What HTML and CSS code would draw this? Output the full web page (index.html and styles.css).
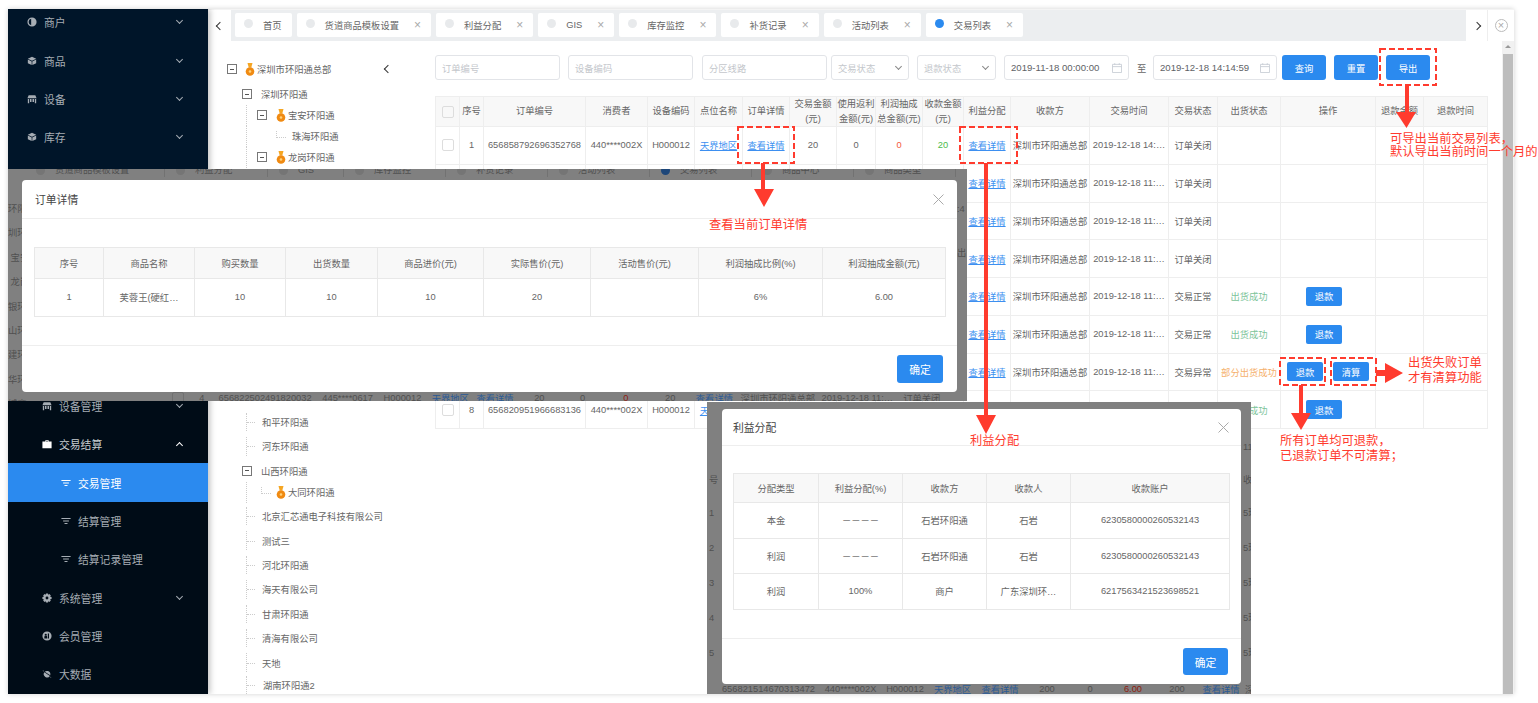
FILE: index.html
```html
<!DOCTYPE html>
<html lang="zh-CN">
<head>
  <meta charset="UTF-8" />
  <title>交易列表</title>
  <link rel="stylesheet" href="styles.css">
</head>
<body>

  <svg class="icon-defs" width="0" height="0">
    <symbol id="i-merchant" viewBox="0 0 12 12"><path fill-rule="evenodd" d="M6 .5a5.5 5.5 0 1 1 0 11a5.5 5.5 0 0 1 0-11zM5 2.2a3.9 3.9 0 0 0 0 7.6z"/></symbol>
    <symbol id="i-cube" viewBox="0 0 12 12"><path d="M6 1l5 2.4L6 5.8 1 3.4zM1 4.3l4.6 2.2v4.4L1 8.7zM11 4.3v4.4l-4.6 2.2V6.5z"/></symbol>
    <symbol id="i-device" viewBox="0 0 12 12"><path d="M2 1.5h8L11.5 5h-11zM1 6h1.6v5H1zM3.6 6h1.8v3.5H3.6zM6.6 6h1.8v3.5H6.6zM9.4 6H11v5H9.4z"/></symbol>
    <symbol id="i-bag" viewBox="0 0 12 12"><path fill-rule="evenodd" d="M4 3V1.5h4V3h3.5v8H.5V3zM5 3h2V2.5H5z"/></symbol>
    <symbol id="i-filter" viewBox="0 0 12 12"><path d="M.5 2.5h11v1.2H.5zM2.5 5.5h7v1.2h-7zM4.2 8.5h3.6v1.2H4.2z"/></symbol>
    <symbol id="i-gear" viewBox="0 0 12 12"><path fill-rule="evenodd" d="M4.8.5h2.4l.3 1.6 1.4-.8 1.7 1.7-.9 1.4 1.8.4v2.4l-1.8.4.9 1.4-1.7 1.7-1.4-.9-.3 1.7H4.8l-.4-1.7-1.3.9-1.7-1.7.8-1.4-1.7-.4V4.8l1.7-.4-.8-1.4 1.7-1.7 1.3.8zM6 4.3a1.7 1.7 0 1 0 0 3.4a1.7 1.7 0 0 0 0-3.4z"/></symbol>
    <symbol id="i-member" viewBox="0 0 12 12"><path fill-rule="evenodd" d="M6 .5a5.5 5.5 0 1 1 0 11a5.5 5.5 0 0 1 0-11zM4.5 3.2a1.3 1.3 0 1 0 0 2.6a1.3 1.3 0 0 0 0-2.6zM7 3v6h1.4V3zM2.8 9h3.4V7.2a1.6 1.6 0 0 0-3.4 0z"/></symbol>
    <symbol id="i-planet" viewBox="0 0 12 12"><path d="M7 2.500a3.800 3.800 0 0 1 2.900 4.900L3.300 3.200A3.800 3.800 0 0 1 7 2.500zM2.800 4l6.700 4.300A3.800 3.800 0 0 1 2.800 4zM.5 1.500l2 .8-.5.7zM9.800 9.200l1.700.6-1.400.3z"/></symbol>
    <symbol id="i-medal" viewBox="0 0 10 13"><path fill="#f5a623" d="M2.500 0h5L6.300 4.500H3.700z"/><circle fill="#f08a12" cx="5" cy="8.500" r="4.300"/><circle fill="#ffd27a" cx="5" cy="8.500" r="1.300"/></symbol>
    <symbol id="i-calendar" viewBox="0 0 11 11"><path fill="none" stroke="#c9ced6" d="M.5 1.500h10v9H.5zM.5 4h10M3 .2v2M8 .2v2"/></symbol>
  </svg>

  <div class="app">
    <aside class="sidebar">
      <ul class="menu menu-top">
        <li class="menu-item"><svg class="menu-icon"><use href="#i-merchant"/></svg>商户<i class="chevron"></i></li>
        <li class="menu-item"><svg class="menu-icon"><use href="#i-cube"/></svg>商品<i class="chevron"></i></li>
        <li class="menu-item"><svg class="menu-icon"><use href="#i-device"/></svg>设备<i class="chevron"></i></li>
        <li class="menu-item"><svg class="menu-icon"><use href="#i-cube"/></svg>库存<i class="chevron"></i></li>
      </ul>
      <!-- the rest of the top menu sits under the first dialog -->
      <div class="menu-hidden"></div>
      <ul class="menu menu-bottom">
        <li class="menu-item level-1"><svg class="menu-icon"><use href="#i-device"/></svg>设备管理<i class="chevron"></i></li>
        <li class="menu-item level-1"><svg class="menu-icon menu-icon-white"><use href="#i-bag"/></svg><span class="menu-open">交易结算</span><i class="chevron chevron-up"></i></li>
        <li class="menu-item level-2 active"><svg class="menu-icon"><use href="#i-filter"/></svg>交易管理</li>
        <li class="menu-item level-2"><svg class="menu-icon"><use href="#i-filter"/></svg>结算管理</li>
        <li class="menu-item level-2"><svg class="menu-icon"><use href="#i-filter"/></svg>结算记录管理</li>
        <li class="menu-item level-1"><svg class="menu-icon"><use href="#i-gear"/></svg>系统管理<i class="chevron"></i></li>
        <li class="menu-item level-1"><svg class="menu-icon"><use href="#i-member"/></svg>会员管理</li>
        <li class="menu-item level-1"><svg class="menu-icon"><use href="#i-planet"/></svg>大数据</li>
      </ul>
    </aside>

    <main class="main">
      <div class="tabbar">
        <div class="tab-arrow"><i class="arrow-left"></i></div>
        <div class="tabs">
          <div class="tab tab-home"><i class="dot"></i>首页</div>
          <div class="tab"><i class="dot"></i>货道商品模板设置<span class="tab-x">×</span></div>
          <div class="tab"><i class="dot"></i>利益分配<span class="tab-x">×</span></div>
          <div class="tab"><i class="dot"></i>GIS<span class="tab-x">×</span></div>
          <div class="tab"><i class="dot"></i>库存监控<span class="tab-x">×</span></div>
          <div class="tab"><i class="dot"></i>补货记录<span class="tab-x">×</span></div>
          <div class="tab"><i class="dot"></i>活动列表<span class="tab-x">×</span></div>
          <div class="tab"><i class="dot dot-active"></i>交易列表<span class="tab-x">×</span></div>
        </div>
        <div class="tab-arrow tab-arrow-right"><i class="arrow-right"></i></div>
        <div class="tab-close"><span>×</span></div>
      </div>

      <div class="workspace">
        <div class="tree">
          <div class="tree-row root"><i class="toggle"></i><svg class="medal"><use href="#i-medal"/></svg>深圳市环阳通总部<i class="arrow-left tree-collapse"></i></div>
          <div class="tree-row lv1"><i class="toggle"></i>深圳环阳通</div>
          <div class="tree-row lv2 sub guide first-sub"><i class="toggle"></i><svg class="medal"><use href="#i-medal"/></svg>宝安环阳通</div>
          <div class="tree-row lv3 sub guide elbow">珠海环阳通</div>
          <div class="tree-row lv2 sub guide"><i class="toggle"></i><svg class="medal"><use href="#i-medal"/></svg>龙岗环阳通</div>
          <!-- middle of the tree is covered by the dialog -->
          <div class="tree-hidden"></div>
          <div class="tree-row leaf">和平环阳通</div>
          <div class="tree-row leaf">河东环阳通</div>
          <div class="tree-row lv1"><i class="toggle"></i>山西环阳通</div>
          <div class="tree-row lv2 sub guide elbow-medal"><svg class="medal"><use href="#i-medal"/></svg>大同环阳通</div>
          <div class="tree-row leaf">北京汇芯通电子科技有限公司</div>
          <div class="tree-row leaf">测试三</div>
          <div class="tree-row leaf">河北环阳通</div>
          <div class="tree-row leaf">海天有限公司</div>
          <div class="tree-row leaf">甘肃环阳通</div>
          <div class="tree-row leaf">清海有限公司</div>
          <div class="tree-row leaf">天地</div>
          <div class="tree-row leaf last">湖南环阳通2</div>
        </div>

        <div class="content">
          <div class="filters">
            <div class="field w125 placeholder">订单编号</div>
            <div class="field w125 placeholder">设备编码</div>
            <div class="field w125 placeholder nudge">分区线路</div>
            <div class="field w78 placeholder near">交易状态<i class="select-arrow"></i></div>
            <div class="field w79 placeholder">退款状态<i class="select-arrow"></i></div>
            <div class="field w125 date">2019-11-18 00:00:00<svg class="cal"><use href="#i-calendar"/></svg></div>
            <span class="to">至</span>
            <div class="field w124 date">2019-12-18 14:14:59<svg class="cal"><use href="#i-calendar"/></svg></div>
            <button class="btn near-btn">查询</button>
            <button class="btn">重置</button>
            <button class="btn">导出</button>
          </div>

          <table class="data-table">
            <colgroup>
              <col class="w24"><col class="w24"><col class="w102"><col class="w62"><col class="w47"><col class="w48"><col class="w47"><col class="w47"><col class="w39"><col class="w47"><col class="w41"><col class="w47"><col class="w79"><col class="w79"><col class="w49"><col class="w63"><col class="w95"><col class="w48"><col class="w64">
            </colgroup>
            <thead>
              <tr>
                <th><i class="check"></i></th><th>序号</th><th>订单编号</th><th>消费者</th><th>设备编码</th><th>点位名称</th><th>订单详情</th><th>交易金额<br>(元)</th><th>使用返利<br>金额(元)</th><th>利润抽成<br>总金额(元)</th><th>收款金额<br>(元)</th><th>利益分配</th><th>收款方</th><th>交易时间</th><th>交易状态</th><th>出货状态</th><th>操作</th><th>退款金额</th><th>退款时间</th>
              </tr>
            </thead>
            <tbody>
              <tr><td><i class="check"></i></td><td>1</td><td>656858792696352768</td><td>440****002X</td><td>H000012</td><td><a>天界地区</a></td><td><a>查看详情</a></td><td>20</td><td>0</td><td class="red">0</td><td class="green">20</td><td><a>查看详情</a></td><td>深圳市环阳通总部</td><td>2019-12-18 14:…</td><td>订单关闭</td><td></td><td></td><td></td><td></td></tr>
              <tr><td></td><td></td><td></td><td></td><td></td><td></td><td></td><td></td><td></td><td></td><td></td><td><a>查看详情</a></td><td>深圳市环阳通总部</td><td>2019-12-18 11:…</td><td>订单关闭</td><td></td><td></td><td></td><td></td></tr>
              <tr><td></td><td></td><td></td><td></td><td></td><td></td><td></td><td></td><td></td><td></td><td></td><td><a>查看详情</a></td><td>深圳市环阳通总部</td><td>2019-12-18 11:…</td><td>订单关闭</td><td></td><td></td><td></td><td></td></tr>
              <tr><td></td><td></td><td></td><td></td><td></td><td></td><td></td><td></td><td></td><td></td><td></td><td><a>查看详情</a></td><td>深圳市环阳通总部</td><td>2019-12-18 11:…</td><td>订单关闭</td><td></td><td></td><td></td><td></td></tr>
              <tr><td></td><td></td><td></td><td></td><td></td><td></td><td></td><td></td><td></td><td></td><td></td><td><a>查看详情</a></td><td>深圳市环阳通总部</td><td>2019-12-18 11:…</td><td>交易正常</td><td class="ok">出货成功</td><td><button class="btn-small btn-single">退款</button></td><td></td><td></td></tr>
              <tr><td></td><td></td><td></td><td></td><td></td><td></td><td></td><td></td><td></td><td></td><td></td><td><a>查看详情</a></td><td>深圳市环阳通总部</td><td>2019-12-18 11:…</td><td>交易正常</td><td class="ok">出货成功</td><td><button class="btn-small btn-single">退款</button></td><td></td><td></td></tr>
              <tr><td></td><td></td><td></td><td></td><td></td><td></td><td></td><td></td><td></td><td></td><td></td><td><a>查看详情</a></td><td>深圳市环阳通总部</td><td>2019-12-18 11:…</td><td>交易异常</td><td class="part">部分出货成功</td><td><button class="btn-small">退款</button><button class="btn-small btn-next">清算</button></td><td></td><td></td></tr>
              <tr><td><i class="check"></i></td><td>8</td><td>656820951966683136</td><td>440****002X</td><td>H000012</td><td><a>天界地区</a></td><td></td><td></td><td></td><td></td><td></td><td></td><td></td><td></td><td></td><td class="ok">出货成功</td><td><button class="btn-small btn-single">退款</button></td><td></td><td></td></tr>
            </tbody>
          </table>
        </div>

        <div class="scrollbar"><i class="scroll-up"></i><div class="scroll-thumb"></div></div>
      </div>
    </main>
  </div>

  <!-- dialog 1, pasted over the page with its dimmed background -->
  <div class="backdrop backdrop-order">
    <div class="ghost-tabs">
      <span class="ghost-tab g1"><i class="ghost-dot"></i>货道商品模板设置</span>
      <span class="ghost-tab g2"><i class="ghost-dot"></i>利益分配</span>
      <span class="ghost-tab g3"><i class="ghost-dot"></i>GIS</span>
      <span class="ghost-tab g4"><i class="ghost-dot"></i>库存监控</span>
      <span class="ghost-tab g4"><i class="ghost-dot"></i>补货记录</span>
      <span class="ghost-tab g4"><i class="ghost-dot"></i>活动列表</span>
      <span class="ghost-tab g4"><i class="ghost-dot ghost-dot-blue"></i>交易列表</span>
      <span class="ghost-tab g4"><i class="ghost-dot"></i>商品中心</span>
      <span class="ghost-tab g4"><i class="ghost-dot"></i>商品类型</span>
    </div>
    <div class="ghost-left">
      <span>环阳</span><span>圳环</span><span>&nbsp;宝安</span><span>&nbsp;龙岗</span><span>银环</span><span>山环</span><span>建环</span><span>华环</span><span>城商</span>
    </div>
    <div class="ghost-right"><span>:4</span><span>出</span></div>
    <table class="data-table ghost-row ghost-row-order">
      <colgroup>
        <col class="w24"><col class="w24"><col class="w102"><col class="w62"><col class="w47"><col class="w48"><col class="w41"><col class="w47"><col class="w39"><col class="w47"><col class="w41"><col class="w47"><col class="w79"><col class="w79"><col class="w49">
      </colgroup>
      <tr><td><i class="check"></i></td><td>4</td><td>656822502491820032</td><td>445****0617</td><td>H000012</td><td><a>天界地区</a></td><td><a>查看详情</a></td><td>20</td><td>0</td><td class="red">0</td><td>20</td><td><a>查看详情</a></td><td>深圳市环阳通总部</td><td>2019-12-18 11:…</td><td>订单关闭</td></tr>
    </table>

    <div class="modal modal-order">
      <div class="modal-head">订单详情<svg class="modal-x" viewBox="0 0 11 11"><path d="M.5.5l10 10M10.500.5l-10 10"/></svg></div>
      <div class="modal-body">
        <table class="modal-table">
          <colgroup><col class="w69"><col class="w91"><col class="w91"><col class="w92"><col class="w106"><col class="w107"><col class="w108"><col class="w124"><col class="w123"></colgroup>
          <tr><th>序号</th><th>商品名称</th><th>购买数量</th><th>出货数量</th><th>商品进价(元)</th><th>实际售价(元)</th><th>活动售价(元)</th><th>利润抽成比例(%)</th><th>利润抽成金额(元)</th></tr>
          <tr><td>1</td><td>芙蓉王(硬红…</td><td>10</td><td>10</td><td>10</td><td>20</td><td></td><td>6%</td><td>6.00</td></tr>
        </table>
      </div>
      <div class="modal-foot"><button class="btn btn-ok">确定</button></div>
    </div>
  </div>

  <!-- dialog 2 -->
  <div class="backdrop backdrop-profit">
    <div class="ghost-column ghost-column-left"><span class="ghost-head">号</span><span>1</span><span>2</span><span>3</span><span>4</span><span>5</span></div>
    <div class="ghost-column ghost-column-right"><span class="ghost-time">11</span><span class="ghost-head">收</span><span>5环</span><span>5环</span><span>5环</span><span>5环</span><span>5环</span></div>
    <table class="data-table ghost-row ghost-row-profit">
      <colgroup>
        <col class="w102"><col class="w62"><col class="w47"><col class="w48"><col class="w47"><col class="w47"><col class="w39"><col class="w47"><col class="w41"><col class="w47"><col class="w79">
      </colgroup>
      <tr><td>656821514670313472</td><td>440****002X</td><td>H000012</td><td><a>天界地区</a></td><td><a>查看详情</a></td><td>200</td><td>0</td><td class="red">6.00</td><td>200</td><td><a>查看详情</a></td><td class="ghost-left-text">深圳市环阳通总部</td></tr>
    </table>

    <div class="modal modal-profit">
      <div class="modal-head">利益分配<svg class="modal-x" viewBox="0 0 11 11"><path d="M.5.5l10 10M10.500.5l-10 10"/></svg></div>
      <div class="modal-body">
        <table class="modal-table">
          <colgroup><col class="w85"><col class="w84"><col class="w84"><col class="w84"><col class="w159"></colgroup>
          <tr><th>分配类型</th><th>利益分配(%)</th><th>收款方</th><th>收款人</th><th>收款账户</th></tr>
          <tr><td>本金</td><td>－－－－</td><td>石岩环阳通</td><td>石岩</td><td>6230580000260532143</td></tr>
          <tr><td>利润</td><td>－－－－</td><td>石岩环阳通</td><td>石岩</td><td>6230580000260532143</td></tr>
          <tr><td>利润</td><td>100%</td><td>商户</td><td>广东深圳环…</td><td>6217563421523698521</td></tr>
        </table>
      </div>
      <div class="modal-foot"><button class="btn btn-ok">确定</button></div>
    </div>
  </div>

  <!-- red notes drawn on top of everything -->
  <svg class="notes" viewBox="0 0 1538 703">
    <g class="note-box">
      <rect x="1380" y="49" width="56" height="36"/>
      <rect x="738" y="127" width="56" height="36"/>
      <rect x="960" y="127" width="57" height="36"/>
      <rect x="1280" y="358" width="45" height="27"/>
      <rect x="1331" y="358" width="45" height="27"/>
    </g>
    <g class="note-arrow">
      <path d="M1405 85h4v27h7l-9.500 16-10.500-16h9z"/>
      <path d="M761 163h4v26h9l-10 18-10-18h7z"/>
      <path d="M984 163h4v252h8l-10 19-10-19h8z"/>
      <path d="M1299 385h4v28h8l-10 17-10-17h8z"/>
      <path d="M1376 370h9v-7l18 10-18 10v-7h-9z"/>
    </g>
    <g class="note-text">
      <text x="1390" y="143">可导出当前交易列表，</text>
      <text x="1390" y="156">默认导出当前时间一个月的</text>
      <text x="709" y="229">查看当前订单详情</text>
      <text x="970" y="445">利益分配</text>
      <text x="1408" y="367">出货失败订单</text>
      <text x="1408" y="382">才有清算功能</text>
      <text x="1280" y="445">所有订单均可退款，</text>
      <text x="1280" y="460">已退款订单不可清算；</text>
    </g>
  </svg>

</body>
</html>
```

FILE: styles.css
```css
html, body {
  margin: 0;
  padding: 0;
  height: 703px;
  overflow: hidden;
}

body {
  position: relative;
  background: #fff;
  color: #666;
  font-family: "Liberation Sans", "Noto Sans CJK SC", sans-serif;
  font-size: 9.3px;
}

ul {
  list-style: none;
  margin: 0;
  padding: 0;
}

button {
  font-family: inherit;
  border: none;
  padding: 0;
  cursor: pointer;
}

.icon-defs {
  position: absolute;
}

.app {
  display: flex;
  width: 1506px;
  height: 685px;
  margin: 9px 0 0 8px;
  overflow: hidden;
  box-shadow: 0 0 5px rgba(0, 0, 0, 0.18);
}

/* sidebar */
.sidebar {
  flex: 0 0 200px;
  position: relative;
  z-index: 2;
  overflow: hidden;
  background: #000c17;
  box-shadow: 2px 0 6px rgba(0, 0, 0, 0.25);
}

.menu-top {
  margin-top: -6px;
  background: #001529;
}

.menu-hidden {
  height: 230px;
  background: #001529;
}

.menu-item {
  display: flex;
  align-items: center;
  height: 38.4px;
  padding-left: 19px;
  color: #a6adb4;
  font-size: 10.8px;
}

.menu-icon {
  flex: 0 0 10px;
  width: 10px;
  height: 10px;
  margin-right: 7px;
  fill: currentColor;
}

.level-1 {
  padding-left: 34px;
}

.level-2 {
  padding-left: 53px;
}

.active {
  background: #2b8aef;
  color: #fff;
}

.menu-open {
  color: #c8ccd0;
}

.menu-icon-white {
  fill: #fff;
}

.chevron {
  width: 4px;
  height: 4px;
  margin: -3px 26px 0 auto;
  border-right: 1px solid #a6adb4;
  border-bottom: 1px solid #a6adb4;
  transform: rotate(45deg);
}

.chevron-up {
  margin-top: 3px;
  border-color: #fff;
  transform: rotate(225deg);
}

/* tabs */
.main {
  flex: 1;
  display: flex;
  flex-direction: column;
  min-width: 0;
}

.tabbar {
  flex: 0 0 32px;
  display: flex;
  align-items: flex-start;
  background: #eceef0;
  box-sizing: border-box;
  border-top: 1px solid #f4f4f4;
}

.tab-arrow {
  flex: 0 0 23px;
  height: 31px;
  display: flex;
  align-items: center;
  justify-content: center;
  background: #fff;
}

.tab-arrow-right {
  flex-basis: 22px;
  margin-left: auto;
  border-right: 1px solid #eee;
  box-sizing: border-box;
}

.arrow-left, .arrow-right {
  display: block;
  width: 5px;
  height: 5px;
  border-left: 1.5px solid #333;
  border-bottom: 1.5px solid #333;
  transform: rotate(45deg);
}

.arrow-right {
  transform: rotate(225deg);
}

.tabs {
  display: flex;
  gap: 5px;
  padding: 3px 0 0 4px;
}

.tab {
  display: flex;
  align-items: center;
  height: 24px;
  padding: 0 10px 0 9px;
  background: #fff;
  border-radius: 2px;
  white-space: nowrap;
}

.dot {
  width: 9px;
  height: 9px;
  margin: -3px 10px 0 0;
  border-radius: 50%;
  background: #e8eaec;
}

.dot-active {
  background: #2b8aef;
}

.tab-x {
  width: 7px;
  margin-left: 15px;
  color: #aaa;
  font-size: 12px;
  line-height: 1;
}

.tab-close {
  flex: 0 0 26px;
  height: 31px;
  display: flex;
  align-items: center;
  justify-content: center;
  background: #fff;
}

.tab-close span {
  width: 11px;
  height: 11px;
  border: 1px solid #bbb;
  border-radius: 50%;
  color: #aaa;
  font-size: 11px;
  line-height: 11px;
  text-align: center;
}

/* tree */
.workspace {
  flex: 1;
  display: flex;
  background: #fff;
  min-height: 0;
}

.tree {
  flex: 0 0 222px;
  padding-top: 16px;
  overflow: hidden;
  box-sizing: border-box;
}

.tree-row {
  position: relative;
  display: flex;
  align-items: center;
  height: 24.4px;
  white-space: nowrap;
}

.sub {
  height: 21px;
}

.root {
  padding-left: 19px;
  margin-bottom: 0.6px;
}

.first-sub {
  margin-top: -1.5px;
}

.lv1 {
  padding-left: 34px;
}

.leaf {
  padding-left: 54px;
}

.lv2 {
  padding-left: 49px;
}

.lv3 {
  padding-left: 84px;
}

.last {
  margin-top: -2px;
  padding-left: 55px;
}

.toggle {
  position: relative;
  flex: 0 0 10px;
  height: 10px;
  margin-right: 9px;
  border: 1px solid #777;
  box-sizing: border-box;
}

.toggle::before {
  content: "";
  position: absolute;
  left: 2px;
  right: 2px;
  top: 3.5px;
  height: 1px;
  background: #555;
}

.root .toggle {
  margin-right: 8px;
}

.medal {
  flex: 0 0 10px;
  width: 10px;
  height: 13px;
  margin-right: 2px;
}

.tree-collapse {
  margin: 0 39px 0 auto;
}

.tree-hidden {
  height: 242px;
}

.guide::before {
  content: "";
  position: absolute;
  left: 38px;
  top: 0;
  bottom: 0;
  border-left: 1px dotted #ccc;
}

.leaf::before {
  content: "";
  position: absolute;
  left: 38px;
  top: 3px;
  bottom: 3px;
  border-left: 1px dotted #ccc;
}

.leaf::after, .elbow::after, .elbow-medal::after {
  content: "";
  position: absolute;
  left: 39px;
  top: 50%;
  width: 8px;
  border-top: 1px dotted #ccc;
}

.elbow::after, .elbow-medal::after {
  left: 68px;
  top: 5px;
  width: 9px;
  height: 6px;
  border-left: 1px dotted #ccc;
  border-top: none;
  border-bottom: 1px dotted #ccc;
}

.elbow-medal::after {
  left: 53px;
}

.elbow-medal {
  padding-left: 68px;
  margin-top: -1.5px;
  margin-bottom: 1.5px;
}

/* filters and table */
.content {
  flex: 1;
  min-width: 0;
  padding: 14px 0 0 5px;
}

.filters {
  display: flex;
  align-items: center;
  gap: 8px;
  height: 25px;
  margin-bottom: 16px;
}

.field {
  position: relative;
  display: flex;
  align-items: center;
  height: 25px;
  padding-left: 6px;
  border: 1px solid #e2e4e8;
  border-radius: 3px;
  box-sizing: border-box;
}

.placeholder {
  color: #c4c7cc;
}

.nudge {
  margin-left: 1px;
}

.near {
  margin-left: -4px;
}

.near-btn {
  margin-left: -3px;
}

.date {
  font-size: 9.6px;
  color: #606266;
}

.cal {
  width: 10px;
  height: 10px;
  margin-left: auto;
  margin-right: 6px;
}

.select-arrow {
  width: 4px;
  height: 4px;
  margin: -3px 7px 0 auto;
  border-right: 1px solid #888;
  border-bottom: 1px solid #888;
  transform: rotate(45deg);
}

.to {
  width: 8px;
  text-align: center;
  white-space: nowrap;
}

.btn {
  width: 44px;
  height: 25px;
  background: #2b8aef;
  border-radius: 3px;
  color: #fff;
  font-size: 9.3px;
}

.data-table {
  table-layout: fixed;
  width: 1052px;
  border-collapse: collapse;
  text-align: center;
}

.data-table th, .data-table td {
  padding: 0;
  border: 1px solid #eee;
  white-space: nowrap;
  overflow: hidden;
  font-weight: normal;
}

.data-table thead tr {
  height: 29.5px;
  background: #f8f8f8;
}

.data-table th {
  line-height: 14.5px;
}

.data-table tbody tr {
  height: 37.75px;
}

.data-table a {
  color: #3d8ff0;
  text-decoration: underline;
}

.check {
  display: inline-block;
  width: 10px;
  height: 10px;
  border: 1px solid #ddd;
  border-radius: 2px;
  vertical-align: middle;
}

.red {
  color: #f4593c;
}

.green {
  color: #4cbb4c;
}

.ok {
  color: #7cc49a;
}

.part {
  color: #f5b06c;
}

.btn-small {
  width: 36px;
  height: 19px;
  background: #2b8aef;
  border-radius: 2px;
  color: #fff;
  font-size: 9.3px;
  vertical-align: middle;
}

.btn-single {
  margin-right: 8px;
}

.btn-next {
  margin-left: 10px;
}

.w24 { width: 24px; }
.w39 { width: 39px; }
.w41 { width: 41px; }
.w47 { width: 47px; }
.w48 { width: 48px; }
.w49 { width: 49px; }
.w62 { width: 62px; }
.w63 { width: 63px; }
.w64 { width: 64px; }
.w69 { width: 69px; }
.w78 { width: 78px; }
.w79 { width: 79px; }
.w84 { width: 84px; }
.w85 { width: 85px; }
.w91 { width: 91px; }
.w92 { width: 92px; }
.w95 { width: 95px; }
.w102 { width: 102px; }
.w106 { width: 106px; }
.w107 { width: 107px; }
.w108 { width: 108px; }
.w123 { width: 123px; }
.w124 { width: 124px; }
.w125 { width: 125px; }
.w159 { width: 159px; }

.scrollbar {
  flex: 0 0 12px;
  position: relative;
  background: #f1f1f1;
  padding-top: 13px;
  box-sizing: border-box;
}

.scroll-up {
  position: absolute;
  left: 3px;
  top: 4px;
  border-left: 3px solid transparent;
  border-right: 3px solid transparent;
  border-bottom: 3px solid #999;
}

.scroll-thumb {
  height: 100%;
  margin: 0 1px;
  background: #bdbdbd;
}

/* dialogs */
.backdrop {
  position: absolute;
  z-index: 3;
  overflow: hidden;
  background: #808080;
  color: #505050;
}

.backdrop-order {
  left: 8px;
  top: 169px;
  width: 959px;
  height: 232px;
  padding: 11px 0 0 14px;
  box-sizing: border-box;
}

.backdrop-profit {
  left: 707px;
  top: 402px;
  width: 544px;
  height: 292px;
  padding: 7px 0 0 15px;
  box-sizing: border-box;
}

.modal {
  position: relative;
  z-index: 1;
  background: #fff;
  border-radius: 4px;
  color: #666;
}

.modal-order {
  width: 935px;
  height: 212px;
}

.modal-profit {
  width: 519px;
  height: 275px;
}

.modal-head {
  display: flex;
  align-items: center;
  justify-content: space-between;
  height: 39px;
  padding: 0 13px;
  border-bottom: 1px solid #eee;
  box-sizing: border-box;
  color: #444;
  font-size: 10.8px;
}

.modal-profit .modal-head {
  height: 37px;
  padding: 0 12px 0 11px;
}

.modal-x {
  width: 11px;
  height: 11px;
  fill: none;
  stroke: #aaa;
}

.modal-body {
  height: 126px;
  padding: 28px 0 0 12px;
  box-sizing: border-box;
}

.modal-profit .modal-body {
  height: 192px;
  padding: 27px 0 0 11px;
}

.modal-table {
  table-layout: fixed;
  border-collapse: collapse;
  width: 911px;
  text-align: center;
}

.modal-profit .modal-table {
  width: 496px;
}

.modal-table th, .modal-table td {
  padding: 0;
  border: 1px solid #e8e8e8;
  font-weight: normal;
  white-space: nowrap;
  overflow: hidden;
}

.modal-table th {
  height: 30px;
  background: #f8f8f8;
}

.modal-table td {
  height: 36.5px;
}

.modal-profit .modal-table th {
  height: 28px;
}

.modal-profit .modal-table td {
  height: 34.5px;
}

.modal-foot {
  display: flex;
  justify-content: flex-end;
  padding: 9px 14px 0 0;
  border-top: 1px solid #eee;
}

.modal-profit .modal-foot {
  padding: 9px 13px 0 0;
}

.btn-ok {
  width: 46px;
  height: 28px;
  font-size: 10.8px;
}

.modal-profit .btn-ok {
  width: 45px;
  height: 27px;
}

/* bits of the page that show through the dimmed edge of the pasted dialogs */
.ghost-tabs {
  position: absolute;
  left: 17px;
  top: -5px;
  display: flex;
  white-space: nowrap;
  line-height: 13px;
}

.ghost-tab {
  display: flex;
  align-items: center;
  padding-left: 11px;
  border-right: 1px solid #727272;
  box-sizing: border-box;
}

.g1 { width: 140px; }
.g2 { width: 103px; }
.g3 { width: 76px; }
.g4 { width: 102px; }

.ghost-dot {
  width: 9px;
  height: 9px;
  margin-right: 10px;
  border-radius: 50%;
  background: #757575;
}

.ghost-dot-blue {
  background: #1d4679;
}

.ghost-left {
  position: absolute;
  left: 0;
  top: 28px;
  display: flex;
  flex-direction: column;
  line-height: 24.4px;
  white-space: nowrap;
}

.ghost-right {
  position: absolute;
  left: 949px;
  top: 18px;
  display: flex;
  flex-direction: column;
  line-height: 44px;
  white-space: nowrap;
}

.ghost-row {
  position: absolute;
}

.data-table.ghost-row td {
  height: 37px;
  border-color: transparent;
}

.data-table.ghost-row a {
  color: #2a5a96;
}

.ghost-row .check {
  border-color: #707070;
}

.ghost-row .red {
  color: #8f1d10;
}

.ghost-row-order {
  left: 157px;
  top: 209px;
  width: 782px;
}

.ghost-row-profit {
  left: 10px;
  top: 267px;
  width: 599px;
}

.ghost-left-text {
  text-align: left;
  padding-left: 5px;
}

.ghost-column {
  position: absolute;
  display: flex;
  flex-direction: column;
  line-height: 35px;
  white-space: nowrap;
}

.ghost-column-left {
  left: 2px;
  top: 62px;
}

.ghost-column-right {
  left: 536px;
  top: 28px;
}

.ghost-head {
  line-height: 32px;
}

.ghost-time {
  line-height: 34px;
}

/* notes */
.notes {
  position: absolute;
  left: 0;
  top: 0;
  z-index: 4;
  width: 1538px;
  height: 703px;
  pointer-events: none;
}

.note-box rect {
  fill: none;
  stroke: #ff3b2e;
  stroke-width: 2;
  stroke-dasharray: 6 3;
}

.note-arrow path {
  fill: #ff3b2e;
}

.note-text text {
  fill: #ff3b2e;
  font-size: 12.3px;
}
```
